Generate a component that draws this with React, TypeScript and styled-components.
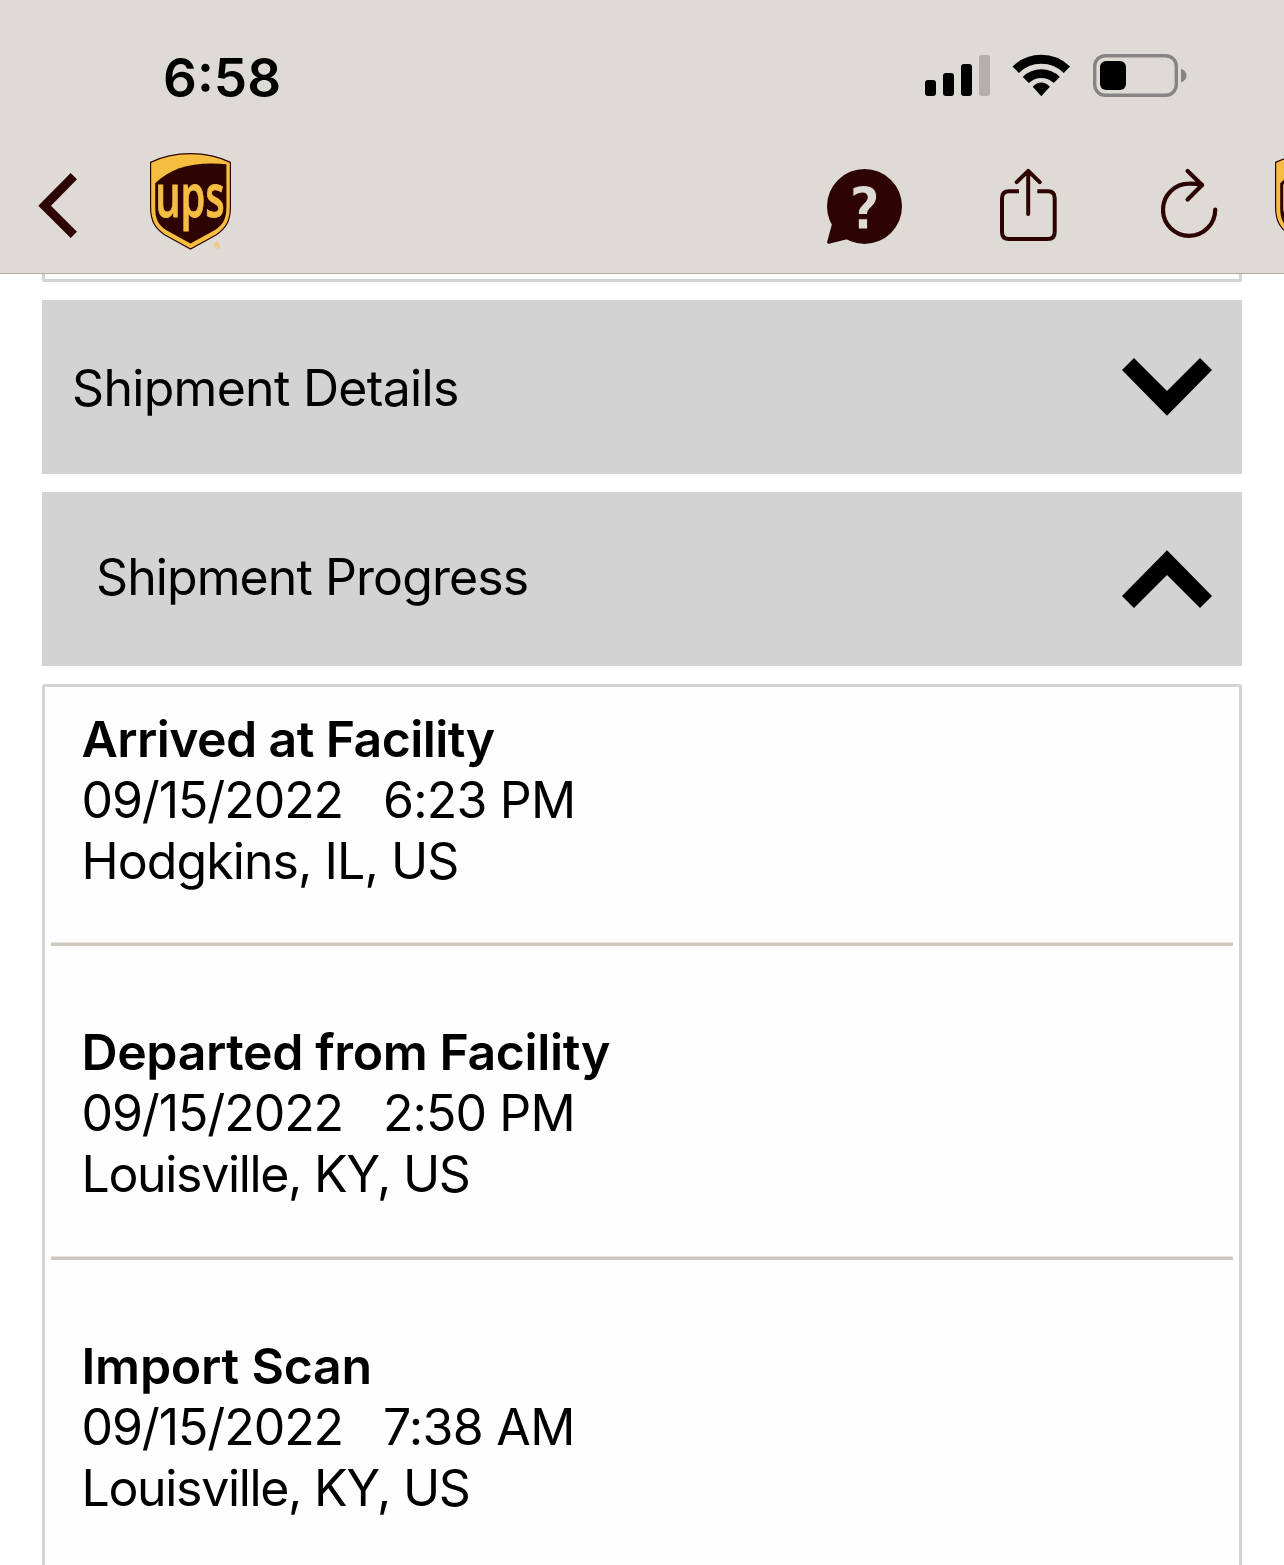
import React from "react";
import styled, { createGlobalStyle } from "styled-components";

const maroon = "#2d0402";
const gold = "#f5be41";
const shade = "#dedbd6";
const line = "#d3d3d3";

const GlobalStyle = createGlobalStyle`
  * { box-sizing: border-box; }
  html, body { margin: 0; padding: 0; background: #fff; }
  body { overflow: hidden; }
`;

const Screen = styled.div`
  width: 1284px;
  height: 1565px;
  overflow: hidden;
  display: flex;
  flex-direction: column;
  background: #fff;
  color: #000;
  font-family: Inter, "Liberation Sans", sans-serif;
  font-size: 50px;
  line-height: 61px;
`;

const Header = styled.header`
  flex: none;
  height: 274px;
  background: ${shade};
  border-bottom: 1px solid #aeaba8;
  overflow: hidden;
`;

const StatusBar = styled.div`
  height: 153px;
  padding: 45px 97px 0 163px;
  display: flex;
  justify-content: space-between;
  align-items: flex-start;
`;

const Clock = styled.time`
  padding-top: 1px;
  font-size: 53px;
  font-weight: 600;
  line-height: 64px;
`;

const StatusIcons = styled.div`
  display: flex;
  padding-top: 9px;
  gap: 22px;
`;

const Icon = styled.svg`
  display: block;
  flex: none;
`;

const Toolbar = styled.nav`
  display: flex;
  width: 1356px;
  padding-left: 38px;
`;

const ToolButton = styled.button<{ $after: number }>`
  flex: none;
  padding: 0;
  border: 0;
  background: none;
  color: ${maroon};
  margin-right: ${(p) => p.$after}px;
`;

const Spacer = styled.div`
  flex: 1;
`;

const LogoText = styled.text`
  font-family: "Open Sans", "Noto Sans", sans-serif;
  font-weight: 600;
  font-size: 60px;
  fill: ${gold};
  stroke: ${gold};
  stroke-width: 0.9px;
`;

const Registered = styled.text`
  font-family: "Liberation Sans", sans-serif;
  font-size: 9px;
  font-weight: 700;
  fill: ${gold};
`;

const HelpMark = styled.text`
  font-family: "DejaVu Sans Condensed", "DejaVu Sans", sans-serif;
  font-weight: 700;
  font-size: 59px;
  fill: ${shade};
  stroke: ${maroon};
  stroke-width: 1px;
  text-anchor: middle;
`;

const Content = styled.main`
  flex: 1;
  min-height: 0;
  padding: 0 42px;
  display: flex;
  flex-direction: column;
  gap: 18px;
`;

const PreviousPanel = styled.div`
  flex: none;
  height: 8px;
  border: solid ${line};
  border-width: 0 3px 3px;
  border-radius: 0 0 3px 3px;
`;

const SectionBar = styled.button<{ $indent: number; $top: number }>`
  flex: none;
  height: 174px;
  padding: ${(p) => p.$top}px 30px 0 ${(p) => p.$indent}px;
  border: 0;
  background: ${line};
  color: inherit;
  font: inherit;
  display: flex;
  justify-content: space-between;
  align-items: flex-start;
`;

const Label = styled.span<{ $spacing: number }>`
  letter-spacing: ${(p) => p.$spacing}px;
  white-space: nowrap;
`;

const ChevronBox = styled.span<{ $nudge: number }>`
  display: block;
  padding-top: ${(p) => p.$nudge}px;
`;

const Panel = styled.section`
  flex: none;
  height: 900px;
  padding: 0 6px;
  border: 3px solid ${line};
  border-radius: 3px;
  background: #fefefe;
`;

const Scan = styled.article<{ $first: boolean }>`
  padding: ${(p) => (p.$first ? "22px 30.5px 50px" : "76px 30.5px 51px")};
`;

const Title = styled.h2<{ $spacing: number }>`
  margin: 0;
  font-size: 50px;
  font-weight: 600;
  letter-spacing: ${(p) => p.$spacing}px;
`;

const When = styled.div`
  display: flex;
  gap: 40px;
`;

const Divider = styled.hr`
  margin: 0;
  height: 4px;
  border: 0;
  border-top: 1px solid #e6e3df;
  background: #cdc8c2;
`;

function Shield() {
  return (
    <Icon width="81" height="97" viewBox="0 0 81 97" role="img" aria-label="UPS">
      <path
        d="M.6 9.4C14 2.6 27 .6 40.5.6S67 2.6 80.4 9.4V54C80.4 68 76 75.5 66 82L40.5 96 15 82C5 75.5.6 68 .6 54Z"
        fill={gold}
        stroke={maroon}
        strokeWidth="1.2"
      />
      <path
        d="M5.2 30.3C22 14 44 8.4 76.4 11.2V54C76.4 66 73 71.5 65 77L40.5 90.6 16 77C8 71.5 5.2 66 5.2 54Z"
        fill={maroon}
      />
      <LogoText transform="translate(5.2 64.4) scale(.665 1)">ups</LogoText>
      <Registered x="63.8" y="95.5">®</Registered>
    </Icon>
  );
}

function Chevron({ up = false }: { up?: boolean }) {
  return (
    <Icon width="90" height="58" viewBox="0 0 90 58">
      <polygon
        points="0,12 12,0 45,33 78,0 90,12 45,57.7"
        transform={up ? "matrix(1 0 0 -1 0 58)" : undefined}
      />
    </Icon>
  );
}

function Signal() {
  return (
    <Icon width="65" height="43" viewBox="0 0 65 43">
      <rect x="0" y="26" width="11" height="16" rx="3" />
      <rect x="18" y="19" width="11" height="23" rx="3" />
      <rect x="36" y="10" width="11" height="32" rx="3" />
      <rect x="54" y="1" width="11" height="41" rx="3" fill="#b3afac" />
    </Icon>
  );
}

function Wifi() {
  return (
    <Icon width="59" height="43" viewBox="0 0 59 43">
      <g fill="none" stroke="#000">
        <path d="M3.7 15.7A36.5 36.5 0 0 1 54.9 15.7" strokeWidth="9" />
        <path d="M13.8 26A22 22 0 0 1 44.8 26" strokeWidth="8.6" />
      </g>
      <path d="M20.7 32.7Q29.3 24.4 37.9 32.7L29.3 42.3Z" />
    </Icon>
  );
}

function Battery() {
  return (
    <Icon width="94" height="43" viewBox="0 0 94 43">
      <rect x="1.7" y="1.7" width="81.6" height="39.6" rx="10.5" fill="none" stroke="#878583" strokeWidth="3.4" />
      <rect x="7" y="7" width="26" height="29" rx="6" />
      <path d="M88 14.5Q93.5 17 93.5 21.5T88 28.5Z" fill="#878583" />
    </Icon>
  );
}

const scans = [
  { title: "Arrived at Facility", ts: -0.6, date: "09/15/2022", time: "6:23 PM", ms: -0.8, place: "Hodgkins, IL, US", ps: -0.93 },
  { title: "Departed from Facility", ts: -0.4, date: "09/15/2022", time: "2:50 PM", ms: -0.9, place: "Louisville, KY, US", ps: -1.33 },
  { title: "Import Scan", ts: -0.23, date: "09/15/2022", time: "7:38 AM", ms: -0.7, place: "Louisville, KY, US", ps: -1.33 },
];

export default function App() {
  return (
    <Screen>
      <GlobalStyle />
      <Header>
        <StatusBar>
          <Clock>6:58</Clock>
          <StatusIcons>
            <Signal />
            <Wifi />
            <Battery />
          </StatusIcons>
        </StatusBar>
        <Toolbar>
          <ToolButton $after={73} aria-label="Back">
            <Icon width="39" height="97" viewBox="0 0 39 97" fill="currentColor">
              <polygon points=".3,52.7 32.7,20 39,26.3 13,52.7 39,78.8 32.7,85" />
            </Icon>
          </ToolButton>
          <Shield />
          <Spacer />
          <ToolButton $after={98} aria-label="Help">
            <Icon width="75" height="97" viewBox="0 0 75 97" fill="currentColor">
              <circle cx="37.5" cy="53.4" r="37.5" />
              <path d="M5 71 .1 89Q0 91 2 90.7L21 86Z" />
              <HelpMark x="37.7" y="75.5">?</HelpMark>
            </Icon>
          </ToolButton>
          <ToolButton $after={104} aria-label="Share">
            <Icon width="57" height="97" viewBox="0 0 57 97" fill="none" stroke="currentColor" strokeWidth="4">
              <path d="M19 38.2H9Q2 38.2 2 45.2V79Q2 86 9 86H47.7Q54.7 86 54.7 79V45.2Q54.7 38.2 47.7 38.2H37.3" />
              <path d="M28.2 61V18.2M16.7 29.2 28.2 17.8 39.7 29.2" strokeLinecap="round" strokeLinejoin="round" />
            </Icon>
          </ToolButton>
          <ToolButton $after={57} aria-label="Refresh">
            <Icon width="57" height="97" viewBox="0 0 57 97" fill="none" stroke="currentColor" strokeWidth="4.2" strokeLinecap="round" strokeLinejoin="round">
              <path d="M54.2 56.5A26.1 26.1 0 1 1 28.1 30.6Q35 30.4 41 32" />
              <path d="M26.6 17.9 41 32 26.6 46.4" />
            </Icon>
          </ToolButton>
          <Shield />
        </Toolbar>
      </Header>
      <Content>
        <PreviousPanel />
        <SectionBar $indent={30} $top={58}>
          <Label $spacing={-0.7}>Shipment Details</Label>
          <ChevronBox $nudge={0}>
            <Chevron />
          </ChevronBox>
        </SectionBar>
        <SectionBar $indent={54} $top={55}>
          <Label $spacing={-0.92}>Shipment Progress</Label>
          <ChevronBox $nudge={3}>
            <Chevron up />
          </ChevronBox>
        </SectionBar>
        <Panel>
          {scans.map((s, i) => (
            <React.Fragment key={s.title}>
              <Scan $first={i === 0}>
                <Title $spacing={s.ts}>{s.title}</Title>
                <When>
                  <Label $spacing={-1.09}>{s.date}</Label>
                  <Label $spacing={s.ms}>{s.time}</Label>
                </When>
                <Label $spacing={s.ps}>{s.place}</Label>
              </Scan>
              {i < scans.length - 1 && <Divider />}
            </React.Fragment>
          ))}
        </Panel>
      </Content>
    </Screen>
  );
}
